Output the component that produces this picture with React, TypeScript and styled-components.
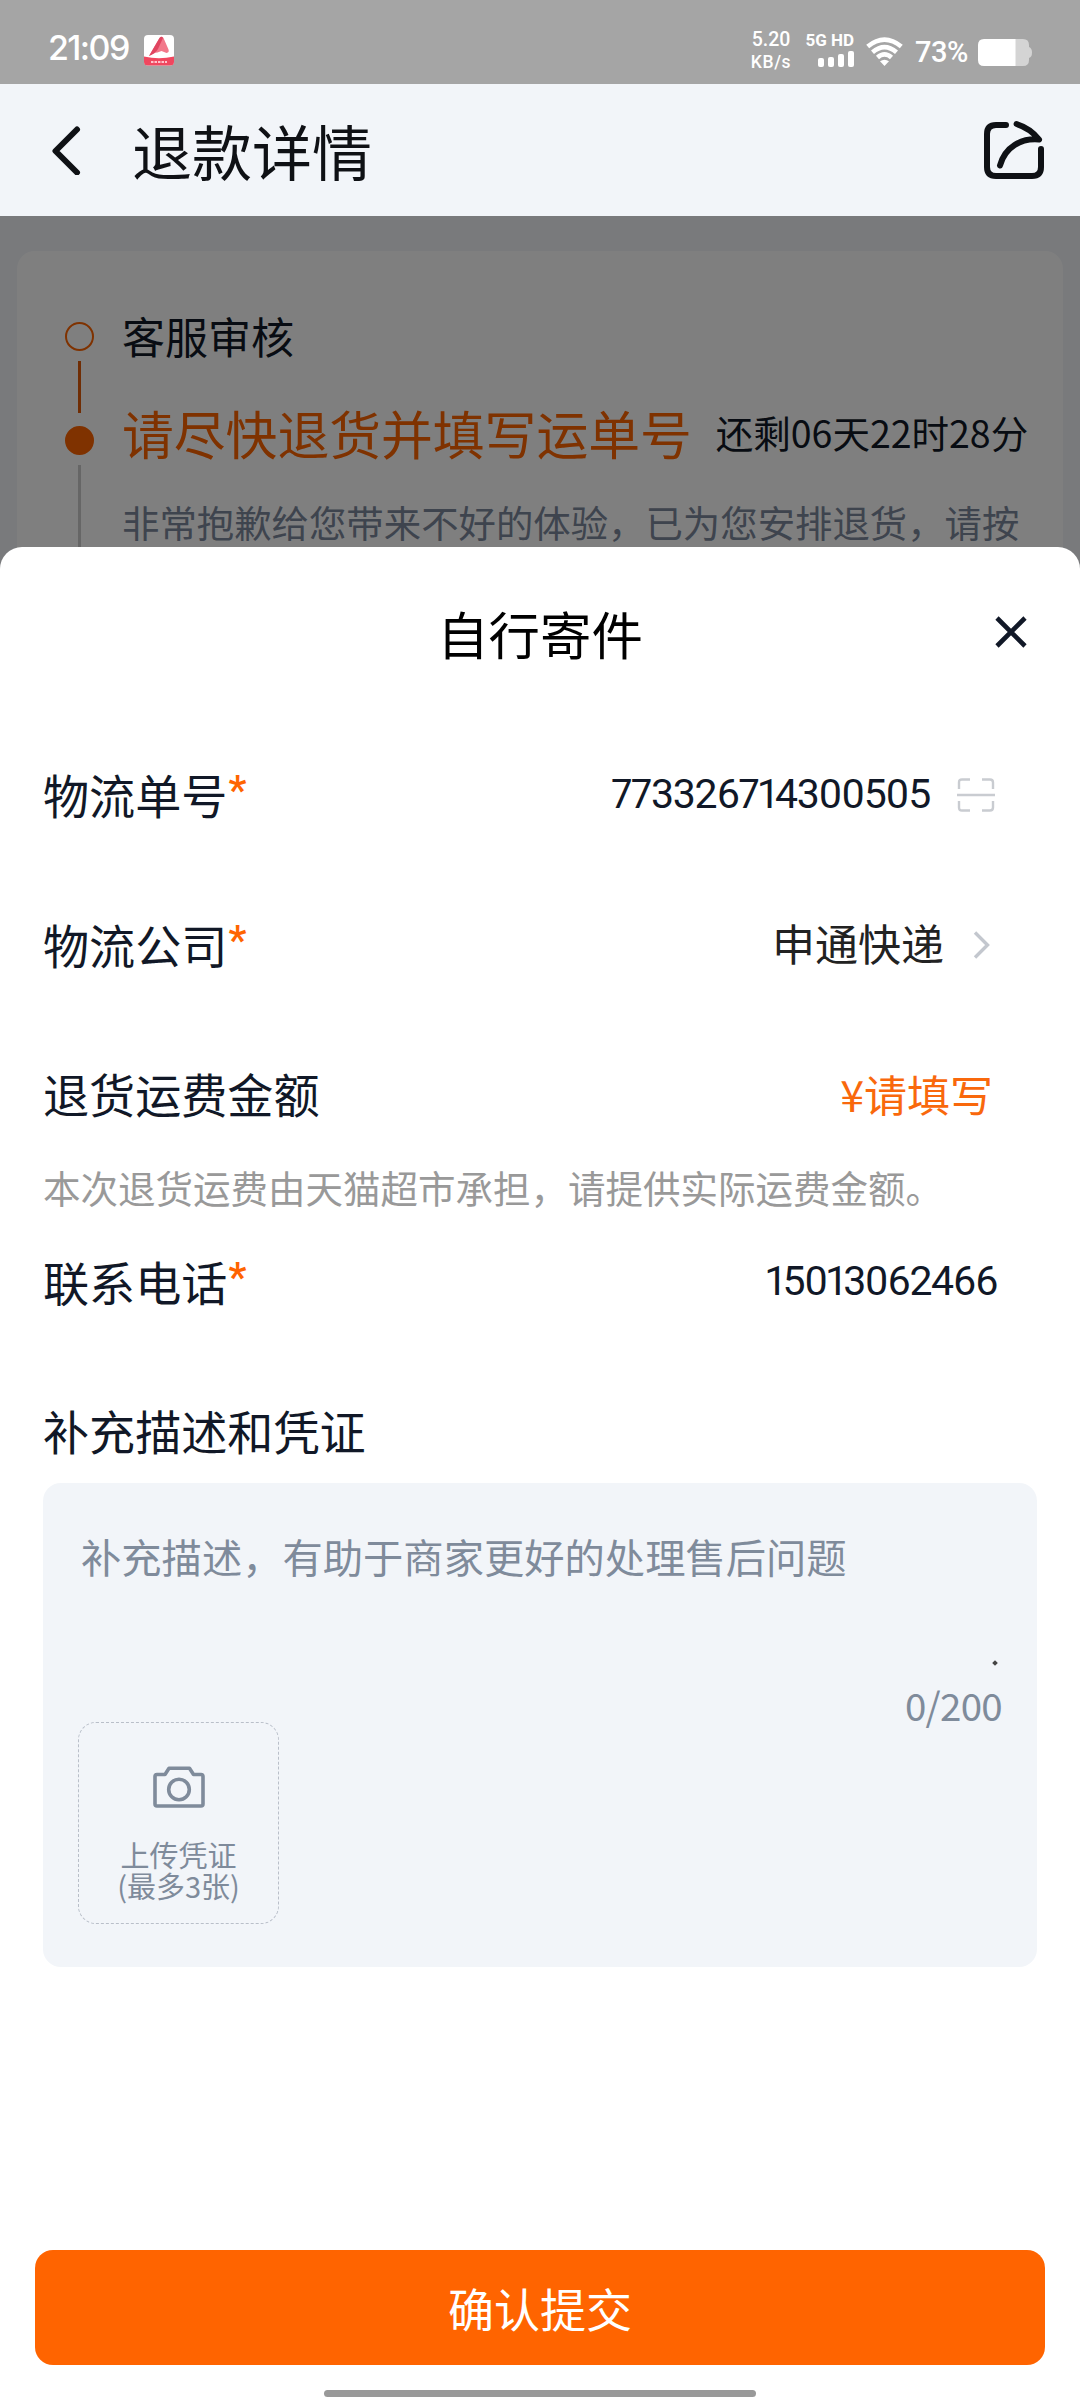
import React from "react";
import styled, { createGlobalStyle } from "styled-components";

const cjk = `"Noto Sans CJK SC", "Noto Sans", sans-serif`;
const latin = `Roboto, "Noto Sans CJK SC", sans-serif`;

const GlobalStyle = createGlobalStyle`
  *, *::before, *::after { box-sizing: border-box; }
  body { margin: 0; background: #fff; font-family: ${cjk}; }
  button { font-family: inherit; border: 0; padding: 0; background: none; color: inherit; }
`;

const Screen = styled.div`
  position: relative;
  display: flex;
  flex-direction: column;
  width: 1080px;
  height: 2400px;
  overflow: hidden;
  background: #f2f5f9;
`;

/* status bar */
const StatusBar = styled.header`
  display: flex;
  justify-content: space-between;
  height: 84px;
  padding: 0 48px;
  background: #a5a5a5;
  color: #fff;
  font-family: ${latin};
`;
const StatusLeft = styled.div`
  display: flex;
  align-items: center;
  gap: 14px;
  padding-top: 17px;
`;
const Clock = styled.span`
  width: 82px;
  margin-top: -5px;
  font-family: Inter, ${latin};
  font-size: 34px;
  font-weight: 500;
  line-height: 40px;
  letter-spacing: -1.6px;
  white-space: nowrap;
`;
const StatusRight = styled.div`
  display: flex;
  align-items: flex-start;
`;
const NetSpeed = styled.div`
  display: flex;
  flex-direction: column;
  align-items: center;
  width: 40px;
  margin: 28px 14px 0 0;
  font-size: 19.5px;
  line-height: 23px;
  font-weight: 500;
  white-space: nowrap;
`;
const Unit = styled.span`
  font-size: 17.5px;
  letter-spacing: 0.6px;
`;
const Cellular = styled.div`
  display: flex;
  flex-direction: column;
  align-items: flex-end;
  width: 49px;
  margin: 32px 12px 0 0;
  font-size: 17px;
  font-weight: 700;
  line-height: 17px;
  white-space: nowrap;
`;
const Bars = styled.div`
  display: flex;
  align-items: flex-end;
  gap: 4px;
  height: 16px;
  margin-top: 2px;
`;
const Bar = styled.i<{ $h: number }>`
  width: 6px;
  height: ${(p) => p.$h}px;
  border-radius: 2px;
  background: #fff;
`;
const WifiIcon = styled.svg`
  margin: 37px 12px 0 0;
`;
const Percent = styled.span`
  width: 54px;
  margin: 35px 9px 0 0;
  font-size: 29px;
  font-weight: 500;
  line-height: 34px;
  letter-spacing: -0.5px;
  white-space: nowrap;
`;
const BatteryIcon = styled.svg`
  margin-top: 39px;
`;

/* title bar */
const TitleBar = styled.nav`
  display: flex;
  align-items: center;
  height: 132px;
  padding: 0 36px 0 50px;
  color: #0f1115;
`;
const PageTitle = styled.h1`
  flex: 1;
  margin: 0 0 1px 50px;
  font-size: 60px;
  font-weight: 400;
  line-height: 72px;
`;

/* progress behind the mask */
const Backdrop = styled.main`
  position: relative;
  flex: 1;
  padding: 35px 17px 0;
`;
const Mask = styled.div`
  position: absolute;
  inset: 0;
  background: rgba(0, 0, 0, 0.5);
`;
const Card = styled.section`
  display: flex;
  gap: 28px;
  height: 480px;
  padding: 0 20px 0 48px;
  border-radius: 18px;
  background: #fff;
`;
const Track = styled.div`
  display: flex;
  flex-direction: column;
  align-items: center;
  width: 29px;
  padding-top: 71px;
`;
const Node = styled.i<{ $filled?: boolean }>`
  width: 29px;
  height: 29px;
  border: 2px solid #ff6400;
  border-radius: 50%;
  background: ${(p) => (p.$filled ? "#ff6400" : "transparent")};
`;
const Link = styled.i<{ $color: string; $h: number; $gap: number }>`
  width: 3px;
  height: ${(p) => p.$h}px;
  margin: 10px 0 ${(p) => p.$gap}px;
  background: ${(p) => p.$color};
`;
const Steps = styled.div`
  display: flex;
  flex-direction: column;
  padding-top: 59px;
  white-space: nowrap;
`;
const StepName = styled.div`
  font-size: 43px;
  line-height: 50px;
  color: #111827;
`;
const StepActive = styled.div`
  display: flex;
  align-items: center;
  gap: 24px;
  height: 60px;
  margin-top: 42px;
  font-size: 51.8px;
  color: #ff6400;
`;
const Remain = styled.span`
  padding-bottom: 2px;
  font-size: 37.5px;
  color: #111827;
`;
const StepText = styled.p`
  margin: 30px 0 0;
  font-size: 37.4px;
  line-height: 60px;
  color: #7c889c;
`;

/* sheet */
const Sheet = styled.section`
  position: absolute;
  inset: 547px 0 0;
  display: flex;
  flex-direction: column;
  border-radius: 22px 22px 0 0;
  background: #fff;
  color: #111827;
`;
const SheetHead = styled.div`
  display: grid;
  grid-template-columns: 100px 1fr 100px;
  align-items: center;
  justify-items: center;
  height: 172px;
  padding-bottom: 2px;
`;
const SheetTitle = styled.h2`
  margin: 0;
  padding-top: 2px;
  grid-column: 2;
  font-size: 51.4px;
  font-weight: 400;
  line-height: 60px;
  color: #000;
`;
const Close = styled.button`
  display: flex;
  margin: 0 39px 0 0;
`;
const Form = styled.div`
  display: flex;
  flex-direction: column;
  padding: 0 43px;
`;
const Row = styled.div<{ $right?: number }>`
  display: flex;
  align-items: center;
  justify-content: space-between;
  height: 149.7px;
  padding-right: ${(p) => p.$right ?? 42}px;
`;
const Label = styled.label`
  display: flex;
  font-size: 46.1px;
  line-height: 60px;
  white-space: nowrap;
`;
const Star = styled.span`
  margin-left: 1px;
  font-family: Roboto, sans-serif;
  font-weight: 600;
  font-size: 40px;
  line-height: 54px;
  color: #ff6400;
`;
const Value = styled.span<{ $color?: string }>`
  display: flex;
  align-items: center;
  font-size: 43px;
  line-height: 60px;
  color: ${(p) => p.$color ?? "#222"};
`;
const Company = styled.span`
  padding-bottom: 3px;
`;
const Digits = styled.span<{ $track?: number }>`
  font-family: ${latin};
  font-size: 41px;
  font-variant-numeric: proportional-nums;
  line-height: 48px;
  letter-spacing: ${(p) => p.$track ?? -1.25}px;
  color: #111827;
`;
const ScanIcon = styled.svg`
  margin: 2px 0 0 27px;
`;
const ArrowIcon = styled.svg`
  margin: 2px 5px 0 29px;
`;
const Hint = styled.p`
  margin: 0;
  height: 38px;
  font-size: 37.5px;
  line-height: 38px;
  color: #999;
  white-space: nowrap;
`;
const SectionLabel = styled(Label)`
  height: 127px;
  padding-top: 44px;
`;
const Panel = styled.div`
  display: flex;
  flex-direction: column;
  height: 484px;
  padding: 44px 35px 0;
  border-radius: 18px;
  background: #f2f5f9;
  color: #7f8b9b;
`;
const Placeholder = styled.div`
  padding-left: 3px;
  font-size: 40.3px;
  line-height: 58px;
`;
const Speck = styled.i`
  align-self: flex-end;
  width: 4px;
  height: 4px;
  margin: 76px 5px 0 0;
  background: #444;
  transform: rotate(45deg);
`;
const Counter = styled.div`
  align-self: flex-end;
  height: 57px;
  padding-top: 15px;
  font-size: 38.5px;
  line-height: 48px;
  letter-spacing: -0.7px;
`;
const Upload = styled.button`
  display: flex;
  flex-direction: column;
  align-items: center;
  width: 201px;
  height: 202px;
  padding-top: 43px;
  border: 1px dashed #b9bfc9;
  border-radius: 18px;
  font-size: 29px;
  line-height: 31px;
`;
const UploadText = styled.span`
  margin-top: 31px;
  white-space: pre;
`;
const Footer = styled.footer`
  display: flex;
  flex-direction: column;
  align-items: center;
  gap: 25px;
  margin-top: auto;
  padding: 0 35px 3px;
`;
const Submit = styled.button`
  width: 100%;
  height: 115px;
  padding-bottom: 2px;
  border-radius: 18px;
  background: #ff6400;
  color: #fff;
  font-size: 46px;
`;
const HomeBar = styled.i`
  width: 432px;
  height: 7px;
  border-radius: 4px;
  background: #999;
`;

function AppBadge() {
  return (
    <svg width="30" height="31" viewBox="0 0 30 31">
      <rect width="30" height="30.5" rx="4" fill="#fff" />
      <path d="M0 21.5q15 3.5 30 0V27q0 3.500-4 3.500H4q-4 0-4-3.500z" fill="#f0475f" />
      <path d="M5 21L15.500 3q2-2.500 4 0l5 11.500q1 3-2 3.500l-5-2-4 1.500q-4 0-8.500 3.500z" fill="#f2788a" />
      <path d="M5 21L15.500 3q2-2.500 3.500 0L14 14q-3 5-9 7z" fill="#e04560" />
      <path d="M7 27h16" stroke="#ffc2cb" strokeWidth="2" strokeDasharray="2.500 1" />
    </svg>
  );
}

export default function App() {
  return (
    <>
      <GlobalStyle />
      <Screen>
        <StatusBar>
          <StatusLeft>
            <Clock>21:09</Clock>
            <AppBadge />
          </StatusLeft>
          <StatusRight>
            <NetSpeed>
              <span>5.20</span>
              <Unit>KB/s</Unit>
            </NetSpeed>
            <Cellular>
              5G HD
              <Bars>
                {[9, 10, 13, 16].map((h) => (
                  <Bar key={h} $h={h} />
                ))}
              </Bars>
            </Cellular>
            <WifiIcon width="37" height="29" viewBox="0 0 37 29" fill="none" stroke="#fff" strokeWidth="4.6">
              <path d="M1.700 9.500Q18.500-4.300 35.300 9.500" />
              <path d="M6.500 15.300Q18.500 5 30.500 15.300" />
              <path d="M11.500 20.500Q18.500 14.300 25.500 20.500" />
              <path d="M14 24.300Q18.500 21 23 24.300L18.500 29z" fill="#fff" stroke="none" />
            </WifiIcon>
            <Percent>73%</Percent>
            <BatteryIcon width="54" height="27" viewBox="0 0 54 27">
              <path d="M37 0h8q6 0 6 6v2q3 1 3 5.500T51 19v2q0 6-6 6h-8z" fill="#d4d4d4" />
              <path d="M6 0h31.500v27H6q-6 0-6-6V6q0-6 6-6z" fill="#fff" />
            </BatteryIcon>
          </StatusRight>
        </StatusBar>

        <TitleBar>
          <svg width="32" height="50" viewBox="0 0 32 50" fill="none" stroke="currentColor" strokeWidth="6" strokeLinecap="round" strokeLinejoin="round">
            <path d="M27 4.500L5.500 26L27 47.500" />
          </svg>
          <PageTitle>退款详情</PageTitle>
          <svg width="60" height="60" viewBox="0 0 60 60" fill="none" stroke="currentColor" strokeWidth="6" strokeLinecap="round" strokeLinejoin="round">
            <path d="M22 5H12Q3 5 3 14V47Q3 56 12 56H48Q57 56 57 47V29" />
            <path d="M32.600 4C42 7 50 13 55 19.500C37 18 21 27 16 45.500" />
          </svg>
        </TitleBar>

        <Backdrop>
          <Card>
            <Track>
              <Node />
              <Link $color="#e05a08" $h={52} $gap={13} />
              <Node $filled />
              <Link $color="#ccc" $h={200} $gap={0} />
            </Track>
            <Steps>
              <StepName>客服审核</StepName>
              <StepActive>
                请尽快退货并填写运单号
                <Remain>还剩06天22时28分</Remain>
              </StepActive>
              <StepText>非常抱歉给您带来不好的体验，已为您安排退货，请按</StepText>
            </Steps>
          </Card>
          <Mask />
        </Backdrop>

        <Sheet>
          <SheetHead>
            <SheetTitle>自行寄件</SheetTitle>
            <Close aria-label="关闭">
              <svg width="32" height="32" viewBox="0 0 32 32" fill="none" stroke="#111827" strokeWidth="4.6">
                <path d="M2 2L30 30M30 2L2 30" />
              </svg>
            </Close>
          </SheetHead>

          <Form>
            <Row>
              <Label>物流单号<Star>*</Star></Label>
              <Value>
                <Digits>773326714300505</Digits>
                <ScanIcon width="38" height="34" viewBox="0 0 38 34" fill="none" stroke="#c9ccd1" strokeWidth="2.4">
                  <path d="M2 11V4.500Q2 1.500 5 1.500H13M25 1.500H33Q36 1.500 36 4.500V11M36 23V29.500Q36 32.500 33 32.500H25M13 32.500H5Q2 32.500 2 29.500V23M0 17H38" />
                </ScanIcon>
              </Value>
            </Row>
            <Row>
              <Label>物流公司<Star>*</Star></Label>
              <Value>
                <Company>申通快递</Company>
                <ArrowIcon width="17" height="28" viewBox="0 0 17 28" fill="none" stroke="#c3c7ce" strokeWidth="3.4">
                  <path d="M2 1.500L14.500 14L2 26.500" />
                </ArrowIcon>
              </Value>
            </Row>
            <Row $right={44}>
              <Label>退货运费金额</Label>
              <Value $color="#f9680c">¥请填写</Value>
            </Row>
            <Hint>本次退货运费由天猫超市承担，请提供实际运费金额。</Hint>
            <Row $right={40}>
              <Label>联系电话<Star>*</Star></Label>
              <Value>
                <Digits $track={-1.35}>15013062466</Digits>
              </Value>
            </Row>
            <SectionLabel>补充描述和凭证</SectionLabel>
            <Panel>
              <Placeholder>补充描述，有助于商家更好的处理售后问题</Placeholder>
              <Speck />
              <Counter>0/200</Counter>
              <Upload>
                <svg width="52" height="42" viewBox="0 0 52 42" fill="none" stroke="currentColor" strokeWidth="3.6" strokeLinejoin="round">
                  <path d="M4 8.500H12L16 2.300H36.500L40.500 8.500H48Q50 8.500 50 10.500V38Q50 40 48 40H4Q2 40 2 38V10.500Q2 8.500 4 8.500Z" />
                  <circle cx="26" cy="23.500" r="10.300" />
                </svg>
                <UploadText>{"上传凭证\n(最多3张)"}</UploadText>
              </Upload>
            </Panel>
          </Form>

          <Footer>
            <Submit>确认提交</Submit>
            <HomeBar />
          </Footer>
        </Sheet>
      </Screen>
    </>
  );
}
